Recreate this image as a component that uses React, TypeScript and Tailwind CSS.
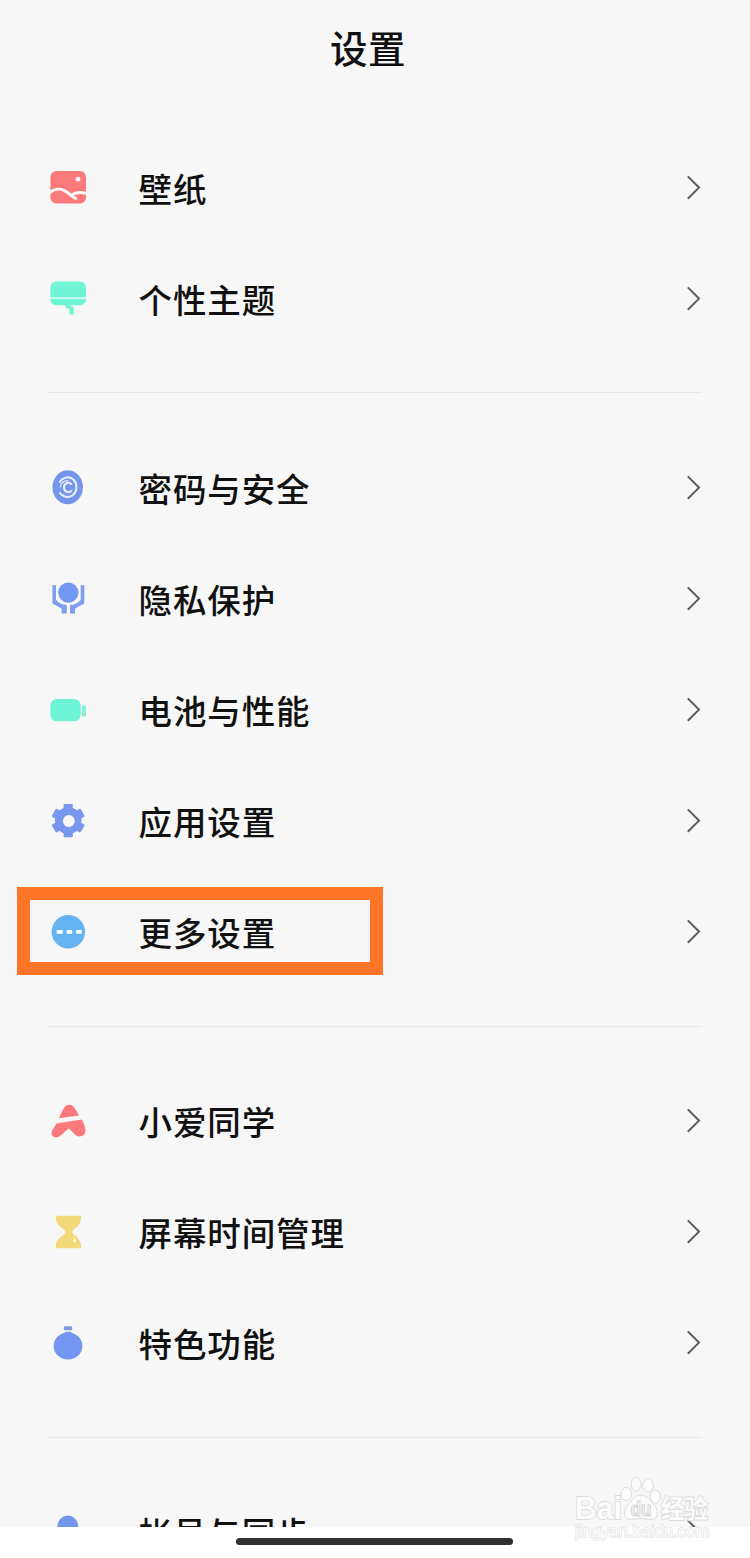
import type { ReactNode } from "react";

type Item = {
  label: string;
  icon: ReactNode;
  highlighted?: boolean;
};

const WallpaperIcon = () => (
  <>
    <rect x="2.4" y="3" width="35.6" height="32.4" rx="6" fill="#fb7a7c" />
    <circle cx="30" cy="11.2" r="2.4" fill="#f7f7f7" />
    <path
      d="M1.5 24.6C6 21 12 20.2 16.5 22.6C20.5 24.6 24 29.2 28.8 30.8M22.5 27.6C27 24.4 33 23.6 38.8 25.6"
      fill="none"
      stroke="#f7f7f7"
      strokeWidth="3"
    />
  </>
);

const ThemeIcon = () => (
  <>
    <rect x="2.3" y="2.4" width="35.7" height="23.8" rx="6" fill="#70f5d5" />
    <path d="M2 19.2H38" stroke="#f0fbf8" strokeWidth="1.3" />
    <path
      d="M17.4 25V27.4Q17.4 29.6 19.6 29.6H21.4V33.4Q21.4 35.8 23.6 35.8H25.6V27.6H22.6V25Z"
      fill="#70f5d5"
    />
  </>
);

const PasswordIcon = () => (
  <>
    <ellipse cx="19.7" cy="19.3" rx="15.2" ry="17" fill="#7495ea" />
    <g fill="none" stroke="#e6ecfb" strokeWidth="2.1">
      <path d="M11.4 14.6C15 8.6 22 7.8 25.8 12C29.8 16.4 29.2 23.6 25 27C20.6 30.6 14.4 29 11.4 24.2" />
      <path d="M23.6 16.6C21.6 13.4 16.4 14.8 16 19C15.8 23.8 21 26 23.8 22.4" />
    </g>
    <path d="M12.4 19.4C12.8 14.8 16.6 12 20.6 13" fill="none" stroke="#e6ecfb" strokeWidth="1.3" />
  </>
);

const PrivacyIcon = () => (
  <>
    <path
      d="M4.4 6.2H8V20.4C10 23.6 13.6 25.4 18.7 26V34.6H13.6V29.6L4.4 24.4Z"
      fill="#7f9eee"
    />
    <path
      d="M36.3 6.2H32.7V20.4C30.7 23.6 27.1 25.4 22 26V34.6H27.1V29.6L36.3 24.4Z"
      fill="#7f9eee"
    />
    <circle cx="20.3" cy="13.6" r="10.2" fill="#7398f3" />
  </>
);

const BatteryIcon = () => (
  <>
    <rect x="2.3" y="9" width="30.4" height="22.3" rx="6.5" fill="#6df5d5" />
    <path d="M34 15.5H36.5Q38 15.5 38 17V25Q38 26.5 36.5 26.5H34Z" fill="#87f2da" />
  </>
);

const GearIcon = () => (
  <>
    <g fill="#7898ef">
      <circle cx="20.2" cy="19.6" r="13.3" />
      <rect x="15.6" y="3" width="9.2" height="33.2" rx="1.2" />
      <rect x="15.6" y="3" width="9.2" height="33.2" rx="1.2" transform="rotate(60 20.2 19.6)" />
      <rect x="15.6" y="3" width="9.2" height="33.2" rx="1.2" transform="rotate(120 20.2 19.6)" />
    </g>
    <circle cx="20.8" cy="20" r="5.9" fill="#f7f7f7" />
  </>
);

const MoreIcon = () => (
  <>
    <circle cx="20.3" cy="19.8" r="16.7" fill="#64b3f3" />
    <path d="M8.7 19.8H14.7M18.6 19.8H24.2M28.1 19.8H33.7" stroke="#fff" strokeWidth="3.8" />
  </>
);

const AssistantIcon = () => (
  <g fill="#fb797b">
    <path d="M11 17.2C13 12 15 8.4 16.8 5.8C18.8 3 23.2 3 25.2 5.6C27.4 8.4 29.4 11.2 31 14.4Z" />
    <path d="M8.4 22.6L34 18.6C35.6 22.4 37.8 26.6 37.4 30.6C36.8 35.2 31.6 36.8 28 34.4C25.4 32.6 23.4 29.4 20.8 27.6C17.6 29.6 14.6 33.6 11.2 35.6C7.6 37.6 3 35.6 3.6 31.6C4 28.6 6.6 26.2 8.4 22.6Z" />
  </g>
);

const HourglassIcon = () => (
  <>
    <path
      d="M7.8 3.8H33V7C32 13 28.4 15.6 24.6 18.6V21.4C28.4 24.4 32.6 28 33 32.4V36.2H7.8V32.4C8.2 28 13.4 24.2 17.2 21.4V18.6C13.4 15.6 8.6 13 7.8 7Z"
      fill="#f4d97b"
    />
    <path d="M25.8 24.2L28.2 28.8C28.6 31 25.2 31 25 28.8Z" fill="#fdf6dd" />
  </>
);

const FlaskIcon = () => (
  <g fill="#7496f2">
    <rect x="15.8" y="3.2" width="8.4" height="4" rx="1.2" fill="#7f98dd" />
    <path d="M17 8.8H23.4V12H17Z" />
    <ellipse cx="20" cy="23" rx="14.4" ry="13.6" />
  </g>
);

const AccountIcon = () => <circle cx="19.8" cy="14" r="10.4" fill="#7495ea" />;

const groups: Item[][] = [
  [
    { label: "壁纸", icon: <WallpaperIcon /> },
    { label: "个性主题", icon: <ThemeIcon /> },
  ],
  [
    { label: "密码与安全", icon: <PasswordIcon /> },
    { label: "隐私保护", icon: <PrivacyIcon /> },
    { label: "电池与性能", icon: <BatteryIcon /> },
    { label: "应用设置", icon: <GearIcon /> },
    { label: "更多设置", icon: <MoreIcon />, highlighted: true },
  ],
  [
    { label: "小爱同学", icon: <AssistantIcon /> },
    { label: "屏幕时间管理", icon: <HourglassIcon /> },
    { label: "特色功能", icon: <FlaskIcon /> },
  ],
  [{ label: "帐号与同步", icon: <AccountIcon /> }],
];

const SettingRow = ({ label, icon, highlighted }: Item) => (
  <li className="relative flex h-[111.1px] items-center pl-12 pr-[49px]">
    {highlighted && (
      <span className="absolute left-[17px] top-[10.5px] h-[88px] w-[366px] border-[13px] border-[#ff7527]" />
    )}
    <svg viewBox="0 0 40 40" className="size-10 shrink-0">
      {icon}
    </svg>
    <span className="ml-[50.5px] flex-1 whitespace-nowrap text-[33.5px] font-medium leading-[34px] tracking-[0.9px]">
      {label}
    </span>
    <svg viewBox="0 0 14 26" className="h-[26px] w-[14px] shrink-0" fill="none">
      <path d="M0.8 1.4L12 12.6L0.8 23.8" stroke="#5a5a5a" strokeWidth="2" />
    </svg>
  </li>
);

const Watermark = () => (
  <div className="absolute left-[574px] top-[1474px] h-[70px] w-[140px] font-['Liberation_Sans',sans-serif] text-white">
    <svg viewBox="0 0 140 70" className="size-full" fill="#fbfbfb" stroke="#dcdcdc" strokeWidth="1">
      <g fontWeight="700" paintOrder="stroke" strokeWidth="1.8">
        <text x="1" y="45" fontSize="31" textLength="47" lengthAdjust="spacingAndGlyphs">
          Bai
        </text>
        <text
          x="87"
          y="44"
          fontSize="25"
          textLength="47"
          lengthAdjust="spacingAndGlyphs"
          fontFamily="'Noto Sans CJK SC', sans-serif"
        >
          经验
        </text>
        <text
          x="1"
          y="63"
          fontSize="17"
          fontWeight="400"
          textLength="134"
          lengthAdjust="spacingAndGlyphs"
          strokeWidth="1.4"
          stroke="#e4e4e4"
        >
          jingyan.baidu.com
        </text>
      </g>
      <ellipse cx="52.3" cy="20" rx="5.2" ry="6.6" />
      <ellipse cx="62" cy="10.3" rx="5" ry="6.8" />
      <ellipse cx="74" cy="11.3" rx="5.4" ry="6.6" />
      <ellipse cx="81.3" cy="22.5" rx="5.2" ry="6.4" />
      <path d="M67 21C60 21 58 27 54 31C48.600 36 49 45.500 57 45.500C61 45.500 63 44.600 67 44.600C71 44.600 73 45.500 77 45.500C85 45.500 85 36 80 31C76 27 74 21 67 21Z" />
      <text x="56.500" y="42" fontSize="20" fontWeight="700" fill="#f4f4f4" stroke="#d4d4d4" textLength="21" lengthAdjust="spacingAndGlyphs">
        du
      </text>
    </svg>
  </div>
);

export default function App() {
  return (
    <div className="relative h-[1558px] w-[750px] overflow-hidden bg-white font-['Noto_Sans_CJK_SC',sans-serif] text-[#111]">
      <main className="h-[1527px] overflow-hidden bg-[#f7f7f7]">
        <header className="flex h-[132px] justify-center pr-[14px] pt-[28px]">
          <h1 className="text-[37.5px] font-medium leading-[38px] tracking-[0.5px]">设置</h1>
        </header>
        {groups.map((group, i) => (
          <section key={i}>
            {i > 0 && (
              <div className="h-[78px] px-12 pt-[38px]">
                <hr className="border-[#e7e7e7]" />
              </div>
            )}
            <ul>
              {group.map((item) => (
                <SettingRow key={item.label} {...item} />
              ))}
            </ul>
          </section>
        ))}
      </main>

      {/* Home indicator */}
      <div className="flex justify-center pr-px pt-[11px]">
        <div className="h-[7px] w-[277px] rounded-full bg-[#303030]" />
      </div>

      <Watermark />
    </div>
  );
}
